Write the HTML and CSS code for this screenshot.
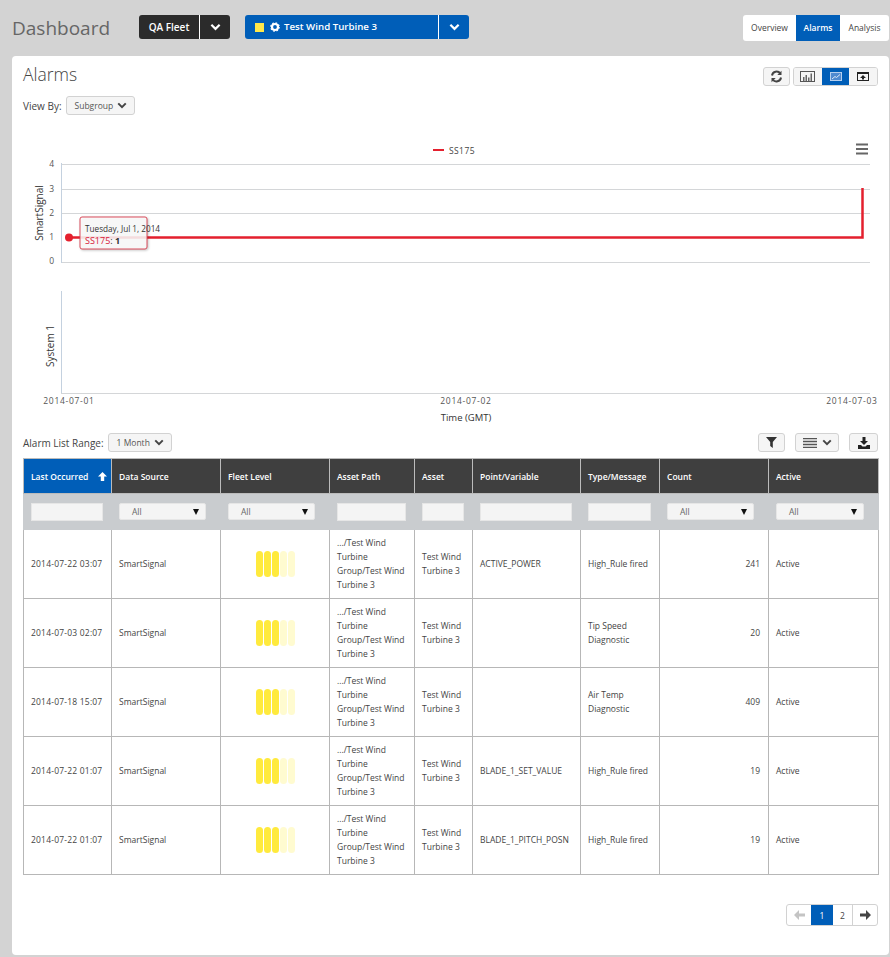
FILE: index.html
```html
<!DOCTYPE html>
<html lang="en">
<head>
<meta charset="utf-8">
<title>Dashboard</title>
<link rel="stylesheet" href="styles.css">
</head>
<body>
<svg class="defs" width="0" height="0" aria-hidden="true">
  <symbol id="chev" viewBox="0 0 12 8"><path d="M1.500 1.500 6 6l4.500-4.500" fill="none" stroke="currentColor" stroke-width="2.400"/></symbol>
</svg>
<header class="topbar">
  <h1 class="page-title">Dashboard</h1>
  <div class="split split-dark">
    <span class="split-label">QA Fleet</span>
    <span class="split-arrow"><svg class="chev-lg"><use href="#chev"/></svg></span>
  </div>
  <div class="split split-blue">
    <span class="split-label asset-label">
      <i class="status-square"></i>
      <svg class="gear" viewBox="0 0 10 10"><circle cx="5" cy="5" r="3" fill="none" stroke="#fff" stroke-width="2.200"/><circle cx="5" cy="5" r="4.200" fill="none" stroke="#fff" stroke-width="1.200" stroke-dasharray="1.600 1.700"/></svg>
      Test Wind Turbine 3
    </span>
    <span class="split-arrow"><svg class="chev-lg"><use href="#chev"/></svg></span>
  </div>
  <nav class="tabs">
    <a class="tab">Overview</a>
    <a class="tab tab-on">Alarms</a>
    <a class="tab">Analysis</a>
  </nav>
</header>

<main class="card">
  <div class="card-head">
    <h2 class="card-title">Alarms</h2>
    <div class="tools">
      <button class="tool refresh" aria-label="Refresh">
        <svg width="13" height="13" viewBox="0 0 13 13"><path d="M2 5.500A4.600 4.600 0 0 1 10.300 3.500" fill="none" stroke="#444" stroke-width="2"/><path d="M11.500.8v4.200H7.300z" fill="#444"/><path d="M11 7.500A4.600 4.600 0 0 1 2.700 9.500" fill="none" stroke="#444" stroke-width="2"/><path d="M1.500 12.200V8h4.200z" fill="#444"/></svg>
      </button>
      <div class="tool-group">
        <button class="tool-seg" aria-label="Bar chart">
          <svg width="15" height="11" viewBox="0 0 15 11"><rect x=".5" y=".5" width="14" height="10" fill="none" stroke="#555"/><path d="M3 6h1.500v4H3zM5.500 4H7v6H5.500zM8 6.500h1.500V10H8zM10.500 2.500H12V10h-1.500z" fill="#666"/></svg>
        </button>
        <button class="tool-seg seg-on" aria-label="Line chart">
          <svg width="12" height="9" viewBox="0 0 12 9"><rect width="12" height="9" fill="#4f8ad0"/><rect x=".5" y=".5" width="11" height="8" fill="none" stroke="#b5cfee"/><path d="M2 7 5 4.500l1.500 1L10 2.500" fill="none" stroke="#dbe8f7"/></svg>
        </button>
        <button class="tool-seg" aria-label="Expand">
          <svg width="12" height="9" viewBox="0 0 12 9"><rect x=".5" y=".5" width="11" height="8" fill="none" stroke="#222"/><path d="M1 1.500h10" stroke="#222"/><path d="M5 3h2v1.500h2L6 7.500 3 4.500h2z" fill="#222" transform="rotate(180 6 5.200)"/></svg>
        </button>
      </div>
    </div>
  </div>

  <div class="field">
    <span class="field-label">View By:</span>
    <button class="select-btn">Subgroup <svg class="chev-sm"><use href="#chev"/></svg></button>
  </div>

  <svg class="chart" width="855" height="296" viewBox="23 130 855 296" role="img" aria-label="Alarm chart">
    <g class="grid">
      <path d="M61 164.500h809M61 189.500h809M61 213.500h809M61 262.500h809"/>
    </g>
    <path d="M61.500 163v100M61.500 291v103" class="axis"/>
    <path d="M61 393.500h809" class="grid-line"/>
    <path d="M433 150h11" class="series thin"/>
    <text x="449" y="154" class="legend">SS175</text>
    <path d="M856 144.500h12M856 149h12M856 153.500h12" class="menu"/>
    <g class="tick">
      <text x="54" y="167" text-anchor="end">4</text>
      <text x="54" y="192" text-anchor="end">3</text>
      <text x="54" y="216" text-anchor="end">2</text>
      <text x="54" y="240" text-anchor="end">1</text>
      <text x="54" y="264" text-anchor="end">0</text>
      <text x="69" y="404" text-anchor="middle" class="date-tick">2014-07-01</text>
      <text x="466" y="404" text-anchor="middle" class="date-tick">2014-07-02</text>
      <text x="852" y="404" text-anchor="middle" class="date-tick">2014-07-03</text>
    </g>
    <text class="axis-title axis-rot" transform="translate(43 213) rotate(-90)" text-anchor="middle">SmartSignal</text>
    <text class="axis-title axis-rot" transform="translate(54 346) rotate(-90)" text-anchor="middle">System 1</text>
    <text class="axis-title" x="466" y="421" text-anchor="middle">Time (GMT)</text>
    <path d="M69 237.500h793.500V188" class="series"/>
    <circle cx="69" cy="237.500" r="4" fill="#e4202e"/>
    <rect x="80" y="217" width="67" height="32" rx="2" class="tip"/>
    <text x="85" y="232" class="tip-date">Tuesday, Jul 1, 2014</text>
    <text x="85" y="244" class="tip-val"><tspan fill="#d8203a">SS175</tspan>: <tspan font-weight="700">1</tspan></text>
  </svg>

  <div class="list-bar">
    <div class="field">
      <span class="field-label">Alarm List Range:</span>
      <button class="select-btn">1 Month <svg class="chev-sm"><use href="#chev"/></svg></button>
    </div>
    <div class="list-tools">
      <button class="tool t-filter" aria-label="Filter"><svg width="11" height="11" viewBox="0 0 11 11"><path d="M0 0h11L6.800 5v6L4.200 9V5z" fill="#333"/></svg></button>
      <button class="tool t-cols" aria-label="Columns">
        <svg width="14" height="10" viewBox="0 0 14 10"><path d="M0 .500h14M0 3.500h14M0 6.500h14M0 9.500h14" stroke="#555" stroke-width="1.500"/></svg>
        <svg class="chev-sm"><use href="#chev"/></svg>
      </button>
      <button class="tool t-down" aria-label="Download"><svg width="12" height="12" viewBox="0 0 12 12"><path d="M4.500 0h3v4H10L6 8 2 4h2.500z" fill="#222"/><path d="M0 8h3l1.500 1.500h3L9 8h3v4H0z" fill="#222"/></svg></button>
    </div>
  </div>

  <table class="grid-table">
    <colgroup>
      <col class="c1"><col class="c2"><col class="c3"><col class="c4"><col class="c5"><col class="c6"><col class="c7"><col class="c8"><col class="c9">
    </colgroup>
    <thead>
      <tr class="head-row">
        <th class="sorted"><span class="sort-wrap">Last Occurred <svg width="9" height="9" viewBox="0 0 9 9"><path d="M4.500 0 9 4.500H6.200V9H2.800V4.500H0z" fill="#fff"/></svg></span></th>
        <th>Data Source</th><th>Fleet Level</th><th>Asset Path</th><th>Asset</th><th>Point/Variable</th><th>Type/Message</th><th>Count</th><th>Active</th>
      </tr>
      <tr class="filter-row">
        <td><input class="f-input" aria-label="Last Occurred"></td>
        <td><div class="f-select">All<i class="caret"></i></div></td>
        <td><div class="f-select">All<i class="caret"></i></div></td>
        <td><input class="f-input" aria-label="Asset Path"></td>
        <td><input class="f-input" aria-label="Asset"></td>
        <td><input class="f-input" aria-label="Point"></td>
        <td><input class="f-input" aria-label="Type"></td>
        <td><div class="f-select">All<i class="caret"></i></div></td>
        <td><div class="f-select">All<i class="caret"></i></div></td>
      </tr>
    </thead>
    <tbody>
      <tr>
        <td class="date">2014-07-22 03:07</td><td>SmartSignal</td>
        <td><div class="level"><i></i><i></i><i></i><i class="dim"></i><i class="dim"></i></div></td>
        <td>.../Test Wind Turbine Group/Test Wind Turbine 3</td><td>Test Wind Turbine 3</td><td>ACTIVE_POWER</td><td>High_Rule fired</td><td class="num">241</td><td>Active</td>
      </tr>
      <tr>
        <td class="date">2014-07-03 02:07</td><td>SmartSignal</td>
        <td><div class="level"><i></i><i></i><i></i><i class="dim"></i><i class="dim"></i></div></td>
        <td>.../Test Wind Turbine Group/Test Wind Turbine 3</td><td>Test Wind Turbine 3</td><td></td><td>Tip Speed Diagnostic</td><td class="num">20</td><td>Active</td>
      </tr>
      <tr>
        <td class="date">2014-07-18 15:07</td><td>SmartSignal</td>
        <td><div class="level"><i></i><i></i><i></i><i class="dim"></i><i class="dim"></i></div></td>
        <td>.../Test Wind Turbine Group/Test Wind Turbine 3</td><td>Test Wind Turbine 3</td><td></td><td>Air Temp Diagnostic</td><td class="num">409</td><td>Active</td>
      </tr>
      <tr>
        <td class="date">2014-07-22 01:07</td><td>SmartSignal</td>
        <td><div class="level"><i></i><i></i><i></i><i class="dim"></i><i class="dim"></i></div></td>
        <td>.../Test Wind Turbine Group/Test Wind Turbine 3</td><td>Test Wind Turbine 3</td><td>BLADE_1_SET_VALUE</td><td>High_Rule fired</td><td class="num">19</td><td>Active</td>
      </tr>
      <tr>
        <td class="date">2014-07-22 01:07</td><td>SmartSignal</td>
        <td><div class="level"><i></i><i></i><i></i><i class="dim"></i><i class="dim"></i></div></td>
        <td>.../Test Wind Turbine Group/Test Wind Turbine 3</td><td>Test Wind Turbine 3</td><td>BLADE_1_PITCH_POSN</td><td>High_Rule fired</td><td class="num">19</td><td>Active</td>
      </tr>
    </tbody>
  </table>

  <div class="pager-wrap">
    <nav class="pager">
      <a class="pg pg-off" aria-label="Previous"><svg width="11" height="10" viewBox="0 0 11 10"><path d="M5 0 0 5l5 5V6.500h6v-3H5z" fill="#c4c4c4"/></svg></a>
      <a class="pg pg-on">1</a>
      <a class="pg">2</a>
      <a class="pg" aria-label="Next"><svg width="11" height="10" viewBox="0 0 11 10"><path d="M6 0l5 5-5 5V6.500H0v-3h6z" fill="#444"/></svg></a>
    </nav>
  </div>
</main>
</body>
</html>
```

FILE: styles.css
```css
* { box-sizing: border-box; }
html, body { height: 100%; }
body {
  margin: 0;
  background: #d3d3d3;
  font-family: "Open Sans", "Noto Sans", "Liberation Sans", sans-serif;
  color: #333;
  font-size: 9px;
  overflow: hidden;
}
.defs { position: absolute; }
button { font-family: inherit; cursor: pointer; }

.topbar {
  height: 56px;
  display: flex;
  align-items: flex-start;
  padding: 15px 1px 0 12px;
}
.page-title {
  margin: 0;
  width: 127px;
  font-size: 19px;
  line-height: 26px;
  font-weight: 400;
  color: #666;
}
.split {
  height: 24px;
  display: flex;
  border-radius: 3px;
  color: #fff;
  font-weight: 600;
  font-size: 10px;
  line-height: 24px;
  overflow: hidden;
}
.split-dark { background: #2b2b2b; width: 91px; margin-right: 15px; }
.split-blue { background: #005eb8; width: 224px; font-size: 9.700px; }
.split-label { flex: 1; text-align: center; border-right: 1px solid #fff; }
.asset-label { display: flex; align-items: center; padding-left: 10px; text-align: left; }
.split-arrow { width: 30px; display: flex; align-items: center; justify-content: center; }
.chev-lg { width: 11px; height: 8px; color: #fff; }
.status-square { width: 9px; height: 9px; background: #ffe84a; margin-right: 6px; }
.gear { width: 10px; height: 10px; margin-right: 4px; }

.tabs {
  margin-left: auto;
  display: flex;
  height: 26px;
  background: #fff;
  border-radius: 3px;
  overflow: hidden;
  font-size: 8.500px;
  line-height: 26px;
  color: #444;
}
.tab { width: 53px; text-align: center; }
.tab:first-child { width: 53px; }
.tab:last-child { width: 49px; }
.tab-on { width: 44px; background: #005eb8; color: #fff; font-weight: 600; }

.card {
  margin: 0 1px 0 12px;
  height: 899px;
  background: #fff;
  border-radius: 4px;
  padding: 0 11px;
}
.card-head {
  height: 40px;
  display: flex;
  justify-content: space-between;
  align-items: flex-start;
  padding-top: 11px;
}
.card-title {
  margin: -4px 0 0;
  font-size: 17.500px;
  line-height: 22px;
  font-weight: 300;
  color: #444;
}
.tools { display: flex; gap: 3px; }
.tool {
  height: 19px;
  padding: 0;
  border: 1px solid #d2d2d2;
  border-radius: 3px;
  background: #f5f5f5;
  display: inline-flex;
  align-items: center;
  justify-content: center;
}
.refresh { width: 27px; }
.tool-group {
  display: flex;
  height: 19px;
  border: 1px solid #d2d2d2;
  border-radius: 3px;
  overflow: hidden;
  width: 85px;
}
.tool-seg {
  flex: 1;
  padding: 0;
  border: 0;
  background: #f5f5f5;
  display: flex;
  align-items: center;
  justify-content: center;
}
.seg-on { background: #005eb8; }
.field { display: flex; align-items: center; gap: 4px; height: 19px; }
.field-label { font-size: 10px; color: #444; }
.select-btn {
  height: 19px;
  padding: 0 7px 0 8px;
  border: 1px solid #d2d2d2;
  border-radius: 3px;
  background: #f5f5f5;
  font-size: 8.500px;
  color: #555;
  display: inline-flex;
  align-items: center;
  gap: 4px;
}
.chev-sm { width: 10px; height: 7px; color: #444; }

.chart { display: block; margin-top: 15px; }
.chart text { font-family: "Open Sans", "Noto Sans", sans-serif; }
.grid path, .grid-line { stroke: #d4d6d8; stroke-width: 1; fill: none; }
.axis { stroke: #c4d1df; stroke-width: 1; fill: none; }
.series { stroke: #e4202e; stroke-width: 2.500; fill: none; }
.series.thin { stroke-width: 2; }
.legend { font-size: 8.500px; fill: #444; letter-spacing: .4px; }
.menu { stroke: #666; stroke-width: 2; }
.tick { font-size: 8.500px; fill: #555; }
.date-tick { letter-spacing: .7px; }
.axis-title { font-size: 9.500px; fill: #333; }
.axis-title.axis-rot { font-size: 10px; }
.tip { fill: rgba(255,255,255,.85); stroke: #d94a5a; stroke-width: 1; filter: drop-shadow(1px 1px 1px rgba(0,0,0,.25)); }
.tip-date { font-size: 8.200px; fill: #333; }
.tip-val { font-size: 9px; fill: #333; }

.list-bar {
  display: flex;
  justify-content: space-between;
  align-items: center;
  margin-top: 7px;
  height: 19px;
}
.list-tools { display: flex; }
.t-filter { width: 27px; margin-right: 10px; }
.t-cols { width: 44px; gap: 5px; margin-right: 10px; }
.t-down { width: 29px; }

.grid-table {
  margin-top: 6px;
  width: 855px;
  table-layout: fixed;
  border-collapse: collapse;
  font-size: 8.500px;
  color: #444;
}
.c1 { width: 88px; } .c2 { width: 109px; } .c3 { width: 109px; } .c4 { width: 85px; }
.c5 { width: 58px; } .c6 { width: 108px; } .c7 { width: 79px; } .c8 { width: 109px; } .c9 { width: 110px; }
.grid-table td, .grid-table th { border: 1px solid #b7b7b7; padding: 0 7px; }
.date { letter-spacing: .2px; }
.head-row th {
  height: 35px;
  background: #3f3f3f;
  color: #fff;
  font-weight: 600;
  text-align: left;
  border-color: #bbb;
}
.head-row th.sorted { background: #005eb8; }
.sort-wrap { display: flex; justify-content: space-between; align-items: center; margin-right: -3px; }
.filter-row td {
  height: 36px;
  background: #c9cccf;
  border-color: #c9cccf;
}
.f-input {
  display: block;
  width: calc(100% - 1px);
  height: 18px;
  border: 1px solid #e6e6e6;
  background: #f4f4f4;
  padding: 0;
}
.f-select {
  position: relative;
  height: 17px;
  line-height: 15px;
  border: 1px solid #e6e6e6;
  border-radius: 2px;
  background: #f4f4f4;
  padding-left: 12px;
  color: #666;
  margin-right: 7px;
}
.caret {
  position: absolute;
  right: 6px;
  top: 5px;
  border-left: 3.500px solid transparent;
  border-right: 3.500px solid transparent;
  border-top: 6px solid #111;
}
tbody tr { height: 69px; }
tbody td { line-height: 14px; vertical-align: middle; }
.num { text-align: right; padding-right: 8px !important; }
.level { display: flex; justify-content: center; gap: 1px; }
.level i { width: 7px; height: 26px; border-radius: 3.500px; background: #ffea3d; }
.level i.dim { background: #fffbd0; }

.pager-wrap { display: flex; justify-content: flex-end; margin-top: 29px; }
.pager {
  display: flex;
  height: 22px;
  border: 1px solid #d2d2d2;
  border-radius: 3px;
  overflow: hidden;
  background: #fff;
}
.pg {
  width: 20px;
  display: flex;
  align-items: center;
  justify-content: center;
  font-size: 8.500px;
  color: #444;
  border-right: 1px solid #d2d2d2;
}
.pg:first-child { width: 24px; border-right: 0; }
.pg:last-child { width: 24px; border-right: 0; }
.pg-on { background: #005eb8; color: #fff; border-right: 0; width: 22px; }
```
